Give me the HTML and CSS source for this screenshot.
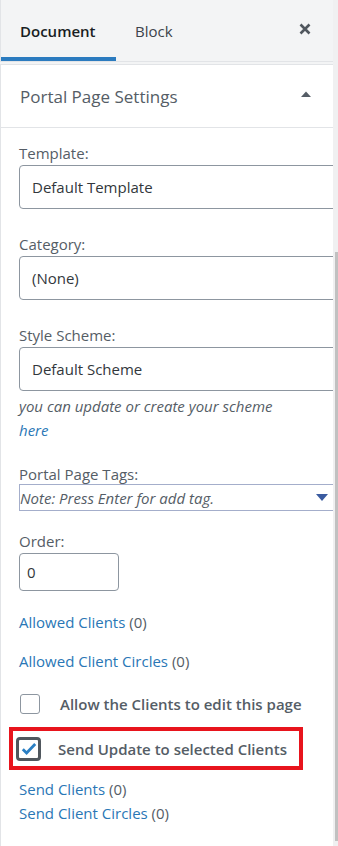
FILE: index.html
```html
<!DOCTYPE html>
<html lang="en">
<head>
    <meta charset="UTF-8">
    <meta name="viewport" content="width=device-width, initial-scale=1.0">
    <title>Portal Page Settings</title>
    <link rel="stylesheet" href="styles.css">
</head>
<body>
    <div class="sidebar">
        <div class="main">
            <header class="tabs">
                <button class="tab active">Document</button>
                <button class="tab">Block</button>
                <div><!-- spacer --></div>
                <button class="close" aria-label="Close settings">
                    <svg width="12" height="12" viewBox="0 0 12 12">
                        <path d="M1.5 1.5l9 9M10.5 1.5l-9 9" stroke="#50575e" stroke-width="2.6" stroke-linecap="butt"/>
                    </svg>
                </button>
            </header>

            <section class="panel">
                <h2 class="panel-title">
                    <span>Portal Page Settings</span>
                    <svg width="10" height="6" viewBox="0 0 10 6"><path d="M0 6L5 0.5 10 6z" fill="#555d66"/></svg>
                </h2>
                <div class="panel-body">
                    <div class="field">
                        <label>Template:</label>
                        <div class="select">Default Template</div>
                    </div>
                    <div class="field">
                        <label>Category:</label>
                        <div class="select">(None)</div>
                    </div>
                    <div class="field tight">
                        <label>Style Scheme:</label>
                        <div class="select">Default Scheme</div>
                    </div>
                    <p class="help">you can update or create your scheme <a href="#">here</a></p>

                    <div class="field tags-field">
                        <label>Portal Page Tags:</label>
                        <div class="tags">
                            <span>Note: Press Enter for add tag.</span>
                            <svg width="12" height="7" viewBox="0 0 12 7"><path d="M0 0h12L6 7z" fill="#3a5ba0"/></svg>
                        </div>
                    </div>
                    <div class="field">
                        <label>Order:</label>
                        <div class="number">0</div>
                    </div>

                    <p class="link-line"><a href="#">Allowed Clients</a> (0)</p>
                    <p class="link-line"><a href="#">Allowed Client Circles</a> (0)</p>

                    <div class="check-row">
                        <span class="checkbox"></span>
                        <span class="check-label">Allow the Clients to edit this page</span>
                    </div>
                    <div class="check-row highlight">
                        <span class="checkbox checked">
                            <svg width="16" height="14" viewBox="0 0 16 14"><path d="M1.8 7.2l3.8 3.8L14.2 2" stroke="#2a7fc4" stroke-width="2.8" fill="none"/></svg>
                        </span>
                        <span class="check-label">Send Update to selected Clients</span>
                    </div>

                    <div class="send-links">
                        <p><a href="#">Send Clients</a> (0)</p>
                        <p><a href="#">Send Client Circles</a> (0)</p>
                    </div>
                </div>
            </section>
        </div>
        <div class="scrollbar"><div class="thumb"></div></div>
    </div>
</body>
</html>
```

FILE: styles.css
```css
body {
    margin: 0;
    font-family: "Open Sans", sans-serif;
    font-size: 15px;
    color: #555d66;
    background: #fff;
}
a {
    color: #2a77b6;
    text-decoration: none;
}
p {
    margin: 0;
}
.sidebar {
    display: flex;
    width: 338px;
    height: 846px;
    overflow: hidden;
}
.main {
    flex: 1;
    min-width: 0;
    overflow: hidden;
    background: #f3f4f5;
}
.scrollbar {
    width: 5px;
    background: #f0f0f1;
    display: flex;
    flex-direction: column;
    justify-content: flex-end;
    padding: 0 0 5px 2px;
    box-sizing: border-box;
}
.thumb {
    height: 589px;
    background: #c1c1c1;
}
.tabs {
    display: flex;
    align-items: stretch;
    height: 62px;
    border-bottom: 1px solid #e2e4e7;
    border-left: 1px solid #e2e4e7;
    box-sizing: border-box;
}
.tabs > div {
    flex: 1;
}
.tab {
    background: none;
    border: none;
    border-bottom: 4px solid transparent;
    font-family: inherit;
    font-size: 15px;
    color: #3c434a;
    padding: 5px 20px 0 19px;
    margin: 0;
}
.tab.active {
    width: 115px;
    text-align: left;
    font-weight: 600;
    color: #191e23;
    border-bottom-color: #2b7bbf;
}
.close {
    background: none;
    border: none;
    padding: 0 22px 4px 0;
    margin: 0;
    display: flex;
    align-items: center;
}
.panel {
    margin-top: 2px;
    background: #fff;
    border-top: 1px solid #e2e4e7;
    border-left: 1px solid #e2e4e7;
    height: 800px;
}
.panel-title {
    margin: 0;
    height: 62px;
    display: flex;
    align-items: center;
    justify-content: space-between;
    padding: 0 22px 0 19px;
    font-size: 17px;
    font-weight: 400;
    color: #555d66;
    border-bottom: 1px solid #e2e4e7;
}
.panel-title svg {
    margin-bottom: 4px;
}
.panel-body {
    padding: 14px 0 0 18px;
}
.field {
    margin-bottom: 24px;
}
.field.tight {
    margin-bottom: 3px;
}
.field.tags-field {
    margin-bottom: 19px;
}
.field label {
    display: block;
    line-height: 22px;
    margin-bottom: 1px;
}
.select {
    width: 340px;
    height: 44px;
    box-sizing: border-box;
    border: 1px solid #8d96a0;
    border-radius: 4px;
    padding: 0 12px;
    display: flex;
    align-items: center;
    color: #32373c;
}
.help {
    font-style: italic;
    line-height: 24px;
    width: 275px;
    margin-bottom: 21px;
}
.tags {
    display: flex;
    align-items: center;
    justify-content: space-between;
    height: 27px;
    box-sizing: border-box;
    border: 1px solid #a4aecb;
    border-right: none;
    margin-top: -2px;
    padding: 0 5px 0 0;
    font-style: italic;
}
.number {
    width: 100px;
    height: 38px;
    box-sizing: border-box;
    border: 1px solid #8d96a0;
    border-radius: 4px;
    padding: 0 7px;
    display: flex;
    align-items: center;
    color: #32373c;
}
.link-line {
    line-height: 24px;
    margin-bottom: 15px;
}
.field + .link-line {
    margin-top: -5px;
}
.check-row {
    display: flex;
    align-items: center;
    gap: 20px;
    height: 24px;
    padding-left: 1px;
    margin-top: 19px;
}
.checkbox {
    width: 20px;
    height: 20px;
    box-sizing: border-box;
    border: 1px solid #8d96a0;
    border-radius: 3px;
}
.check-label {
    font-weight: 600;
    color: #555d66;
}
.check-row.highlight {
    margin: 11px 0 0 -10px;
    width: 294px;
    height: 43px;
    box-sizing: border-box;
    border: 4px solid #e8141d;
    padding-left: 3px;
    gap: 17px;
}
.checkbox.checked {
    width: 25px;
    height: 24px;
    border: 3px solid #50575e;
    border-radius: 4px;
    display: flex;
    align-items: center;
    justify-content: center;
}
.send-links {
    margin-top: 7px;
    line-height: 24px;
}
```
